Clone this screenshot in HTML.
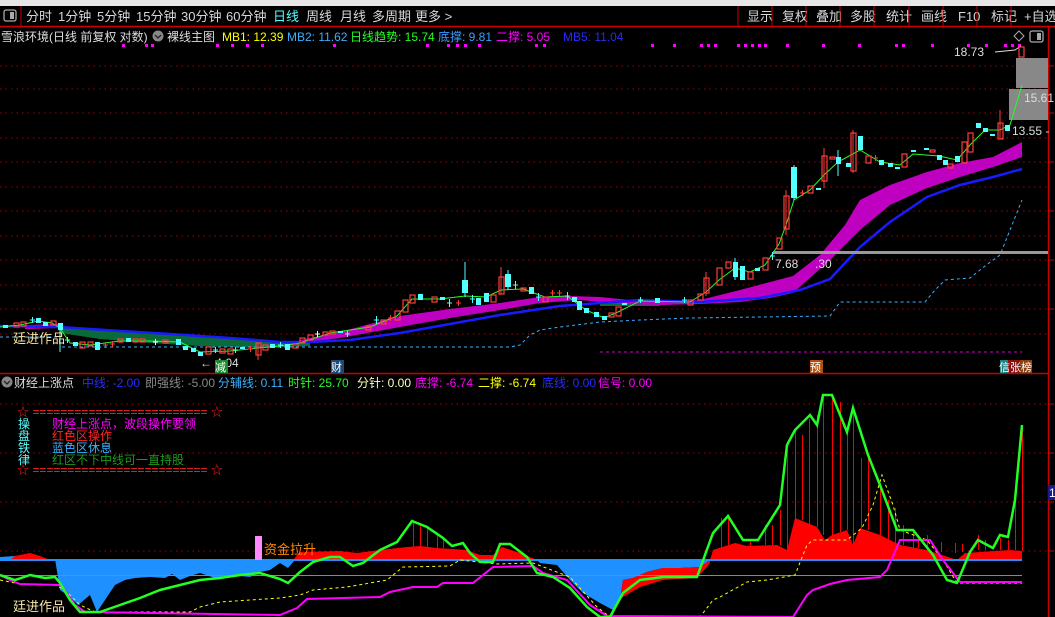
<!DOCTYPE html>
<html><head><meta charset="utf-8"><style>
html,body{margin:0;padding:0;background:#000;width:1055px;height:617px;overflow:hidden}
svg{display:block}
text{font-family:"Liberation Sans","Noto Sans CJK SC",sans-serif}
.r{fill:none;stroke:#ff3c3c;stroke-width:1.2}
.c{fill:#54ffff}
</style></head><body>
<svg width="1055" height="617" viewBox="0 0 1055 617" xmlns="http://www.w3.org/2000/svg">
<rect width="1055" height="617" fill="#000"/>
<rect width="1055" height="6" fill="#e6e6e6"/>
<!-- toolbar -->
<line x1="0" y1="26.5" x2="1055" y2="26.5" stroke="#c00" stroke-width="1.5"/>
<line x1="21" y1="6" x2="21" y2="26" stroke="#c00"/>
<rect x="4" y="10" width="12" height="11" rx="2" fill="none" stroke="#aaa" stroke-width="1.3"/>
<rect x="10" y="12" width="4" height="7" fill="#aaa"/>
<g font-size="13" fill="#d8d8d8">
<text x="26" y="21">分时</text><text x="58" y="21">1分钟</text><text x="97" y="21">5分钟</text><text x="136" y="21">15分钟</text><text x="181" y="21">30分钟</text><text x="226" y="21">60分钟</text><text x="273" y="21" fill="#5ff">日线</text><text x="306" y="21">周线</text><text x="340" y="21">月线</text><text x="372" y="21">多周期</text><text x="415" y="21">更多 &gt;</text>
<text x="747" y="21">显示</text><text x="782" y="21">复权</text><text x="816" y="21">叠加</text><text x="850" y="21">多股</text><text x="886" y="21">统计</text><text x="921" y="21">画线</text><text x="958" y="21">F10</text><text x="991" y="21">标记</text><text x="1024" y="21">+自选</text>
</g>
<g stroke="#c00"><line x1="738" y1="6" x2="738" y2="26"/><line x1="772" y1="6" x2="772" y2="26"/><line x1="806" y1="6" x2="806" y2="26"/><line x1="840" y1="6" x2="840" y2="26"/><line x1="874" y1="6" x2="874" y2="26"/><line x1="909" y1="6" x2="909" y2="26"/><line x1="943" y1="6" x2="943" y2="26"/><line x1="977" y1="6" x2="977" y2="26"/><line x1="1011" y1="6" x2="1011" y2="26"/></g>
<!-- legend -->
<g font-size="12">
<text x="1" y="41" fill="#ddd">雪浪环境(日线 前复权 对数)</text>
<circle cx="158" cy="36" r="5.5" fill="#888"/><path d="M155 35 l3 3 l3 -3" stroke="#222" fill="none" stroke-width="1.3"/>
<text x="167" y="41" fill="#ddd">裸线主图</text>
<text x="222" y="41" fill="#ff0">MB1: 12.39</text>
<text x="287" y="41" fill="#3ab0ff">MB2: 11.62</text>
<text x="350" y="41" fill="#2f2">日线趋势: 15.74</text>
<text x="438" y="41" fill="#3a9cff">底撑: 9.81</text>
<text x="496" y="41" fill="#f0f">二撑: 5.05</text>
<text x="563" y="41" fill="#2828ff">MB5: 11.04</text>
</g>
<path d="M1014 36 l5 -5 l5 5 l-5 5z" fill="none" stroke="#aaa"/>
<rect x="1030" y="31" width="13" height="11" rx="2" fill="none" stroke="#aaa" stroke-width="1.3"/><rect x="1037" y="33" width="4" height="7" fill="#aaa"/>
<!-- magenta dots -->
<g fill="#f0f">
<rect x="122" y="44" width="3" height="3"/><rect x="145" y="44" width="3" height="3"/><rect x="151" y="44" width="3" height="3"/><rect x="216" y="44" width="3" height="3"/><rect x="231" y="44" width="3" height="3"/><rect x="246" y="44" width="3" height="3"/><rect x="261" y="44" width="3" height="3"/><rect x="333" y="44" width="3" height="3"/><rect x="426" y="44" width="3" height="3"/><rect x="447" y="44" width="3" height="3"/><rect x="456" y="44" width="3" height="3"/><rect x="464" y="44" width="3" height="3"/><rect x="478" y="44" width="3" height="3"/><rect x="535" y="44" width="3" height="3"/><rect x="543" y="44" width="3" height="3"/><rect x="651" y="44" width="3" height="3"/><rect x="673" y="44" width="3" height="3"/><rect x="700" y="44" width="3" height="3"/><rect x="707" y="44" width="3" height="3"/><rect x="714" y="44" width="3" height="3"/><rect x="737" y="44" width="3" height="3"/><rect x="744" y="44" width="3" height="3"/><rect x="751" y="44" width="3" height="3"/><rect x="758" y="44" width="3" height="3"/><rect x="764" y="44" width="3" height="3"/><rect x="786" y="44" width="3" height="3"/><rect x="822" y="44" width="3" height="3"/><rect x="858" y="44" width="3" height="3"/><rect x="895" y="44" width="3" height="3"/><rect x="902" y="44" width="3" height="3"/><rect x="931" y="44" width="3" height="3"/><rect x="967" y="44" width="3" height="3"/><rect x="985" y="44" width="3" height="3"/><rect x="1004" y="44" width="3" height="3"/><rect x="1011" y="44" width="3" height="3"/><rect x="1018" y="44" width="3" height="3"/></g>
<!-- grid main -->
<g stroke="#a00" stroke-dasharray="1.5 4">
<line x1="0" y1="66" x2="1048" y2="66"/><line x1="0" y1="89" x2="1048" y2="89"/><line x1="0" y1="113" x2="1048" y2="113"/><line x1="0" y1="138" x2="1048" y2="138"/><line x1="0" y1="162" x2="1048" y2="162"/><line x1="0" y1="187" x2="1048" y2="187"/><line x1="0" y1="211" x2="1048" y2="211"/><line x1="0" y1="236" x2="1048" y2="236"/><line x1="0" y1="260" x2="1048" y2="260"/><line x1="0" y1="285" x2="1048" y2="285"/><line x1="0" y1="309" x2="1048" y2="309"/><line x1="0" y1="334" x2="1048" y2="334"/>
</g>
<!-- right axis -->
<line x1="1048.5" y1="27" x2="1048.5" y2="617" stroke="#c00" stroke-width="1.5"/>
<g stroke="#c00"><line x1="1048" y1="66" x2="1054" y2="66"/><line x1="1048" y1="113" x2="1054" y2="113"/><line x1="1048" y1="162" x2="1054" y2="162"/><line x1="1048" y1="211" x2="1054" y2="211"/><line x1="1048" y1="260" x2="1054" y2="260"/><line x1="1048" y1="309" x2="1054" y2="309"/><line x1="1048" y1="404" x2="1054" y2="404"/><line x1="1048" y1="453" x2="1054" y2="453"/><line x1="1048" y1="502" x2="1054" y2="502"/><line x1="1048" y1="551" x2="1054" y2="551"/></g>
<!-- dark green band -->
<polygon points="60,327 120,331 170,334 230,338 280,342 310,342 310,346 260,348 200,346 150,343 100,339 60,333" fill="#0a6a3a"/>
<polygon points="600,302 660,302 660,306 600,306" fill="#0a6a3a"/>
<!-- magenta band -->
<polygon points="25,325 60,324 60,328 25,329" fill="#c0c"/>
<polygon points="300,340 340,332 400,316 450,309 500,303 540,297 570,296 600,297 630,300 660,302 700,300 740,290 770,282 793,276 820,255 845,225 860,200 890,185 927,172 960,163 993,157 1022,142 1022,157 993,167 960,177 927,188 890,205 860,230 830,260 793,293 770,298 740,302 700,304 660,305 620,304 580,300 540,303 500,310 450,318 400,327 340,338 300,343" fill="#c000c0"/>
<!-- blue MA -->
<polyline points="0,326 60,327 120,331 170,334 230,338 280,342 310,342 350,340 400,333 450,324 500,315 560,306 600,303 640,300 700,302 760,298 800,290 830,279 860,247 890,222 927,197 960,185 993,177 1022,169" fill="none" stroke="#1a1aff" stroke-width="2.5"/>
<!-- cyan dashed support -->
<polyline points="0,337 60,337 60,347 510,347 520,345 530,335 540,330 560,327 600,322 640,320 690,318 760,317 830,316 840,302 925,302 935,290 945,280 970,278 985,266 1000,255 1022,200" fill="none" stroke="#3ab0ff" stroke-dasharray="3 3"/>
<polyline points="600,352 1022,352" fill="none" stroke="#c0c" stroke-dasharray="3 3"/>
<!-- gray line + boxes -->
<rect x="773" y="251" width="275" height="3" fill="#999"/>
<rect x="1016" y="58" width="32" height="30" fill="#888"/>
<rect x="1009" y="89" width="39" height="31" fill="#888"/>
<g font-size="12" fill="#ddd"><text x="954" y="56">18.73</text><text x="1024" y="102">15.61</text><text x="1012" y="135">13.55 -</text><text x="775" y="268">7.68</text><text x="815" y="268">.30</text><text x="200" y="367">← 4.04</text></g>
<path d="M995 52 l20 -2 l6 -4" stroke="#ddd" fill="none"/>
<!-- green close line -->
<polyline points="0,327 20,325 38,321 52,323 60,328 70,343 90,345 120,341 150,341 180,342 200,352 230,351 258,348 280,346 300,343 330,333 370,327 397,316 412,299 440,299 465,296 486,297 501,290 523,289 545,297 567,296 586,310 604,318 618,312 640,301 690,302 706,292 719,280 735,268 750,272 765,265 779,244 786,225 794,200 810,190 824,175 838,162 860,150 880,162 900,165 913,154 939,156 957,160 970,145 985,130 1000,130 1010,125 1022,85" fill="none" stroke="#2f2" stroke-width="1"/>
<!-- wicks -->
<g stroke="#ff3c3c"><line x1="824" y1="148" x2="824" y2="188"/><line x1="853" y1="130" x2="853" y2="173"/><line x1="1000" y1="110" x2="1000" y2="139"/><line x1="501" y1="267" x2="501" y2="294"/><line x1="258" y1="343" x2="258" y2="360"/><line x1="786" y1="190" x2="786" y2="235"/><line x1="706" y1="272" x2="706" y2="296"/></g>
<g stroke="#54ffff"><line x1="465" y1="262" x2="465" y2="297"/><line x1="60" y1="323" x2="60" y2="352"/><line x1="838" y1="150" x2="838" y2="176"/><line x1="794" y1="165" x2="794" y2="200"/><line x1="735" y1="258" x2="735" y2="280"/><line x1="508" y1="270" x2="508" y2="290"/></g>
<!-- red candles -->
<g class="r">
<rect x="14" y="323" width="5" height="4"/><rect x="21" y="322" width="5" height="4"/><rect x="51" y="321" width="5" height="4"/><rect x="80" y="342" width="5" height="6"/><rect x="88" y="342" width="5" height="4"/><rect x="118" y="339" width="5" height="3"/><rect x="133" y="339" width="5" height="3"/><rect x="140" y="339" width="5" height="3"/><rect x="163" y="340" width="5" height="3"/><rect x="206" y="347" width="5" height="7"/><rect x="220" y="349" width="5" height="4"/><rect x="228" y="349" width="5" height="5"/><rect x="256" y="343" width="5" height="12"/><rect x="263" y="345" width="5" height="5"/><rect x="293" y="344" width="5" height="4"/><rect x="300" y="338" width="5" height="5"/><rect x="308" y="335" width="5" height="5"/><rect x="323" y="332" width="5" height="3"/><rect x="330" y="331" width="5" height="3"/>
<rect x="366" y="326" width="5" height="4"/><rect x="381" y="320" width="5" height="4"/><rect x="395" y="311" width="5" height="9"/><rect x="403" y="300" width="5" height="12"/><rect x="410" y="295" width="5" height="8"/><rect x="432" y="297" width="5" height="5"/><rect x="491" y="295" width="5" height="7"/><rect x="499" y="277" width="5" height="17"/><rect x="521" y="288" width="5" height="3"/><rect x="543" y="297" width="5" height="5"/><rect x="609" y="313" width="5" height="4"/><rect x="616" y="307" width="5" height="9"/><rect x="688" y="300" width="5" height="5"/><rect x="698" y="294" width="5" height="6"/><rect x="704" y="278" width="5" height="15"/><rect x="717" y="268" width="5" height="17"/><rect x="726" y="262" width="5" height="6"/><rect x="748" y="272" width="5" height="7"/>
<rect x="763" y="258" width="5" height="12"/><rect x="777" y="238" width="5" height="11"/><rect x="784" y="196" width="5" height="33"/><rect x="808" y="186" width="5" height="7"/><rect x="822" y="156" width="5" height="25"/><rect x="830" y="157" width="5" height="2"/><rect x="851" y="133" width="5" height="38"/><rect x="866" y="156" width="5" height="7"/><rect x="902" y="154" width="5" height="13"/><rect x="930" y="150" width="5" height="2"/><rect x="948" y="164" width="5" height="4"/><rect x="962" y="142" width="5" height="21"/><rect x="968" y="133" width="5" height="19"/><rect x="998" y="123" width="5" height="16"/><rect x="1019" y="47" width="5" height="10"/>
</g>
<!-- cyan candles -->
<g class="c">
<rect x="3" y="325" width="5" height="3"/><rect x="36" y="318" width="5" height="5"/><rect x="43" y="322" width="5" height="4"/><rect x="58" y="323" width="5" height="7"/><rect x="73" y="342" width="5" height="4"/><rect x="95" y="342" width="5" height="8"/><rect x="126" y="338" width="5" height="4"/><rect x="176" y="339" width="5" height="6"/><rect x="183" y="346" width="5" height="4"/><rect x="191" y="348" width="5" height="4"/><rect x="198" y="352" width="5" height="4"/><rect x="240" y="347" width="5" height="2"/><rect x="270" y="344" width="5" height="4"/><rect x="285" y="344" width="5" height="6"/><rect x="338" y="331" width="5" height="2"/>
<rect x="418" y="294" width="5" height="6"/><rect x="440" y="297" width="5" height="3"/><rect x="462" y="280" width="6" height="13"/><rect x="476" y="298" width="5" height="7"/><rect x="484" y="293" width="5" height="9"/><rect x="505" y="274" width="6" height="13"/><rect x="529" y="287" width="5" height="7"/><rect x="572" y="297" width="5" height="5"/><rect x="577" y="301" width="5" height="9"/><rect x="584" y="308" width="5" height="5"/><rect x="594" y="312" width="5" height="5"/><rect x="602" y="316" width="5" height="4"/><rect x="622" y="303" width="5" height="2"/><rect x="655" y="298" width="5" height="5"/><rect x="733" y="262" width="5" height="15"/><rect x="740" y="266" width="5" height="14"/><rect x="755" y="268" width="5" height="3"/>
<rect x="791" y="167" width="6" height="31"/><rect x="816" y="188" width="5" height="2"/><rect x="836" y="157" width="5" height="7"/><rect x="846" y="163" width="5" height="4"/><rect x="858" y="136" width="5" height="14"/><rect x="879" y="160" width="5" height="5"/><rect x="888" y="163" width="5" height="4"/><rect x="895" y="167" width="5" height="2"/><rect x="911" y="150" width="5" height="2"/><rect x="924" y="148" width="5" height="2"/><rect x="937" y="155" width="5" height="5"/><rect x="943" y="160" width="5" height="5"/><rect x="955" y="156" width="5" height="6"/><rect x="976" y="123" width="5" height="5"/><rect x="983" y="128" width="5" height="4"/><rect x="990" y="134" width="5" height="2"/><rect x="1005" y="125" width="5" height="6"/>
</g>
<!-- crosses -->
<g stroke="#54ffff"><path d="M30 320h5M32.5 317v6M65 340h5M67.5 337v6M213 350h5M215.5 347v6M233 350h5M235.5 347v6M278 345h5M280.5 342v6M345 334h5M347.5 331v6M374 320h5M376.5 316v8M447 303h5M449.5 299v8M470 299h5M472.5 295v8M513 285h5M515.5 281v8M536 297h5M538.5 293v8M565 296h5M567.5 292v8M638 300h5M640.5 297v6M682 300h5M684.5 297v6M770 256h5M772.5 252v8"/></g>
<g stroke="#ff3c3c"><path d="M103 345h5M105.5 342v6M110 344h5M112.5 341v6M248 349h5M250.5 346v6M388 318h5M390.5 315v6M456 303h5M458.5 300v6M550 293h5M552.5 290v6M557 293h5M559.5 290v6M800 193h5M802.5 190v6M873 158h5M875.5 155v6"/></g>
<g stroke="#fff"><path d="M153 342h5M155.5 339v6M315 334h5M317.5 331v6"/></g>
<text x="13" y="343" font-size="13" fill="#f5e6a8">廷进作品</text>
<!-- bottom main axis -->
<line x1="0" y1="373.5" x2="1048" y2="373.5" stroke="#c00" stroke-width="1.5"/>
<g font-size="11" fill="#fff">
<rect x="215" y="360" width="13" height="13" fill="#1a8a2a"/><text x="215" y="371">减</text>
<rect x="331" y="360" width="13" height="13" fill="#1a4a7a"/><text x="331" y="371">财</text>
<rect x="810" y="360" width="13" height="13" fill="#b05010"/><text x="810" y="371">预</text>
<rect x="1000" y="360" width="8" height="13" fill="#1a8080"/><rect x="1008" y="360" width="12" height="13" fill="#8a1010"/><rect x="1020" y="360" width="12" height="13" fill="#8a4010"/><text x="999" y="371">信张榜</text>
</g>
<!-- lower header -->
<g font-size="12">
<circle cx="7" cy="382" r="5.5" fill="#888"/><path d="M4 381 l3 3 l3 -3" stroke="#222" fill="none" stroke-width="1.3"/>
<text x="14" y="387" fill="#ddd">财经上涨点</text>
<text x="82" y="387" fill="#2a2aff">中线: -2.00</text>
<text x="145" y="387" fill="#888">即强线: -5.00</text>
<text x="218" y="387" fill="#3ab0ff">分辅线: 0.11</text>
<text x="288" y="387" fill="#2f2">时针: 25.70</text>
<text x="357" y="387" fill="#ffffc0">分针: 0.00</text>
<text x="415" y="387" fill="#f0f">底撑: -6.74</text>
<text x="478" y="387" fill="#ff0">二撑: -6.74</text>
<text x="542" y="387" fill="#2a2aff">底线: 0.00</text>
<text x="598" y="387" fill="#f0f">信号: 0.00</text>
</g>
<g stroke="#a00" stroke-dasharray="1.5 4">
<line x1="0" y1="404" x2="1048" y2="404"/><line x1="0" y1="453" x2="1048" y2="453"/><line x1="0" y1="502" x2="1048" y2="502"/><line x1="0" y1="551" x2="1048" y2="551"/></g>
<!-- legend text lower -->
<g font-size="12">
<text x="17" y="416" fill="#f22">☆ ========================= ☆</text>
<text x="17" y="474" fill="#f22">☆ ========================= ☆</text>
<text x="18" y="428" fill="#5ff">操</text><text x="18" y="440" fill="#5ff">盘</text><text x="18" y="452" fill="#5ff">铁</text><text x="18" y="464" fill="#5ff">律</text>
<text x="52" y="428" fill="#f0f">财经上涨点，波段操作要领</text>
<text x="52" y="440" fill="#f22">红色区操作</text>
<text x="52" y="452" fill="#3ab0ff">蓝色区休息</text>
<text x="52" y="464" fill="#1a9a1a">红区不下中线可一直持股</text>
</g>
<!-- lower fills -->
<polygon points="0,560 0,557 15,556 30,554 40,559 55,559 60,590 70,597 78,605 90,595 97,612 105,600 115,585 125,580 135,578 150,577 165,578 172,574 180,580 190,576 200,573 215,578 230,575 250,577 260,572 270,570 280,563 288,568 295,560" fill="#1e90ff"/>
<polygon points="537,560 540,563 557,565 570,580 583,593 600,603 613,610 620,600 623,580 633,578 647,572 663,568 680,568 700,567 710,560" fill="#1e90ff"/>
<polygon points="620,600 623,580 633,578 647,572 663,568 680,568 700,567 710,560 710,563 697,578 663,580 640,587 623,597" fill="#f00"/>
<polygon points="10,560 15,556 30,553 40,556 50,560" fill="#f00"/>
<polygon points="293,560 300,552 340,551 357,553 380,550 407,547 420,546 437,548 453,549 467,550 480,555 493,555 502,547 520,553 537,560" fill="#f00"/>
<polygon points="710,560 713,550 735,543 747,546 777,545 787,550 795,518 817,527 825,540 832,535 847,530 853,545 860,528 880,535 900,545 927,550 957,560 965,553 1010,550 1022,551 1022,560" fill="#f00"/>
<polyline points="0,560 1022,560" stroke="#1e90ff" stroke-width="2"/>
<line x1="0" y1="575.5" x2="1022" y2="575.5" stroke="#888"/>
<!-- red verticals -->
<g stroke="#f00" transform="translate(0.5,0)"><path d="M413 547v-26M420 546v-22M427 547v-20M437 548v-14M443 548v-10M500 547v-3M721 548v-30M728 548v-31M750 545v-6M765 545v-20M772 545v-20M780 545v-35M787 550v-100M795 520v-90M802 520v-85M809 524v-105M817 527v-112M823 535v-140M832 535v-140M840 532v-130M847 530v-100M853 545v-135M861 528v-70M868 530v-75M880 535v-50M888 540v-40M895 543v-35M903 545v-20M913 548v-18M918 548v-12M927 550v-15M941 552v-10M955 553v-10M962 552v-8M978 550v-15M985 550v-10M1000 550v-12M1008 550v-10M1015 550v-50M1022 551v-125"/></g>
<!-- yellow dashed -->
<polyline points="0,580 20,584 55,585 65,590 80,605 95,612 190,612 200,607 220,602 250,600 280,598 300,595 313,590 347,587 387,580 403,567 450,566 460,560 497,564 533,563 570,577 597,607 610,617 700,617 713,600 720,597 747,582 767,580 795,575 807,545 813,540 847,540 862,528 873,505 882,475 893,505 900,530 927,540 943,560 957,583 1022,583" fill="none" stroke="#ff0" stroke-dasharray="3 3"/>
<!-- magenta solid -->
<polyline points="0,575 10,580 20,584 60,585 65,590 75,605 85,612 280,615 297,608 307,599 380,597 390,592 413,587 437,587 443,583 473,583 493,567 533,566 543,573 567,580 590,605 607,616 793,617 807,595 813,590 830,584 847,580 880,577 887,570 900,540 930,540 943,560 960,582 1022,582" fill="none" stroke="#f0f" stroke-width="2"/>
<!-- green lower -->
<polyline points="0,575 15,580 30,575 45,578 55,577 60,583 70,600 80,612 100,612 120,605 140,598 160,590 180,585 200,580 220,578 240,575 260,573 280,579 288,583 300,572 313,562 330,557 340,557 353,566 363,563 380,550 397,542 412,521 427,527 443,538 452,546 463,543 470,553 480,562 493,562 500,544 510,544 527,557 537,573 553,577 570,588 587,607 600,617 610,617 623,593 640,580 663,577 697,577 713,533 728,516 743,540 758,540 780,505 787,445 795,430 810,415 817,425 823,395 832,395 847,432 853,408 868,455 880,485 897,530 913,530 933,555 947,580 957,583 970,552 978,540 993,548 1000,535 1008,537 1015,500 1022,425" fill="none" stroke="#2f2" stroke-width="2.5"/>
<rect x="255" y="536" width="7" height="24" fill="#f8f"/>
<text x="264" y="554" font-size="13" fill="#f80">资金拉升</text>
<text x="13" y="611" font-size="13" fill="#f5e6a8">廷进作品</text>
<rect x="1048" y="485" width="7" height="15" fill="#1a1a8a"/><text x="1049" y="497" font-size="12" fill="#fff">1</text>
</svg>
</body></html>
